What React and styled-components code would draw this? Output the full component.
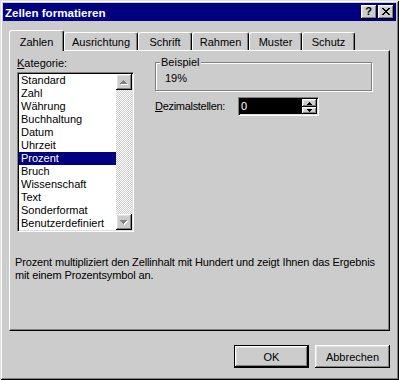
import React from 'react'
import styled, { createGlobalStyle } from 'styled-components'

const face = '#cccccc'

const GlobalStyle = createGlobalStyle`
    html, body {
        margin: 0;
        padding: 0;
        background: ${face};
    }
    body {
        font-family: "Liberation Sans", Arial, sans-serif;
        font-size: 11px;
    }
`

const raised = `
    box-shadow: inset -1px -1px 0 #000, inset 1px 1px 0 #fff,
        inset -2px -2px 0 #808080, inset 2px 2px 0 #dfdfdf;
`

const sunken = `
    border: 1px solid;
    border-color: #808080 #fff #fff #808080;
    box-shadow: inset 1px 1px 0 #000, inset -1px -1px 0 #dfdfdf;
`

const Window = styled.div`
    width: 399px;
    height: 380px;
    box-sizing: border-box;
    padding: 3px;
    background: ${face};
    box-shadow: inset 1px 1px 0 #dfdfdf, inset -1px -1px 0 #000,
        inset 2px 2px 0 #fff, inset -2px -2px 0 #808080;
    display: flex;
    flex-direction: column;
    color: #000;
    font-size: 11px;
    line-height: 13px;
`

const TitleBar = styled.div`
    height: 18px;
    background: #000080;
    color: #fff;
    display: flex;
    align-items: center;
    justify-content: space-between;
    padding: 0 2px;
`

const Title = styled.span`
    font-weight: bold;
    font-size: 11.6px;
`

const CaptionButtons = styled.div`
    display: flex;
    gap: 1px;
`

const CaptionButton = styled.div`
    width: 16px;
    height: 14px;
    box-sizing: border-box;
    background: ${face};
    ${raised}
    color: #000;
    font-weight: bold;
    font-size: 11px;
    display: flex;
    align-items: center;
    justify-content: center;
    padding: 0 1px 1px 0;
`

const Body = styled.div`
    flex: 1;
    display: flex;
    flex-direction: column;
    padding: 9px 6px 0 6px;
`

const TabStrip = styled.div`
    display: flex;
    align-items: flex-end;
    height: 20px;
    position: relative;
    z-index: 1;
`

const Tab = styled.div`
    box-sizing: border-box;
    width: ${p => p.$w}px;
    height: ${p => (p.$active ? 21 : 18)}px;
    margin-bottom: ${p => (p.$active ? -1 : 0)}px;
    padding-top: ${p => (p.$active ? 5 : 3)}px;
    background: ${face};
    border: 1px solid #fff;
    border-right-color: #000;
    border-bottom: none;
    border-radius: 3px 3px 0 0;
    box-shadow: inset -1px 0 0 #808080;
    text-align: center;
`

const Panel = styled.div`
    box-sizing: border-box;
    height: 281px;
    border: 1px solid #fff;
    border-right-color: #000;
    border-bottom-color: #000;
    box-shadow: inset -1px -1px 0 #808080;
    padding-top: 6px;
    display: flex;
    flex-direction: column;
`

const Columns = styled.div`
    display: flex;
    gap: 21px;
    padding-left: 7px;
`

const LeftColumn = styled.div`
    width: 117px;
    display: flex;
    flex-direction: column;
    gap: 2px;
`

const Label = styled.div`
    white-space: nowrap;
    width: ${p => (p.$w ? `${p.$w}px` : 'auto')};
    letter-spacing: ${p => (p.$tight ? '-0.3px' : 'normal')};
    & u {
        text-decoration: underline;
    }
`

const ListBox = styled.div`
    box-sizing: border-box;
    width: 117px;
    height: 160px;
    background: #fff;
    ${sunken}
    display: flex;
    padding: 1px;
`

const Items = styled.div`
    flex: 1;
    display: flex;
    flex-direction: column;
`

const Item = styled.div`
    height: 13px;
    padding-left: 2px;
    white-space: nowrap;
    overflow: hidden;
    background: ${p => (p.$selected ? '#000080' : 'transparent')};
    color: ${p => (p.$selected ? '#fff' : '#000')};
`

const ScrollBar = styled.div`
    width: 16px;
    display: flex;
    flex-direction: column;
`

const ScrollTrack = styled.div`
    flex: 1;
    background: repeating-conic-gradient(${face} 0 25%, #fff 0 50%) 0 0 / 2px 2px;
`

const ArrowButton = styled.div`
    width: ${p => p.$w || 16}px;
    height: ${p => p.$h || 16}px;
    box-sizing: border-box;
    background: ${face};
    ${raised}
    display: flex;
    align-items: center;
    justify-content: center;
`

const RightColumn = styled.div`
    flex: 1;
    display: flex;
    flex-direction: column;
    margin-top: -1px;
`

const GroupBox = styled.fieldset`
    width: 217px;
    box-sizing: border-box;
    margin: 0;
    padding: 3px 0 5px 4px;
    border: 1px solid #808080;
    box-shadow: inset 1px 1px 0 #fff, 1px 1px 0 #fff;
    min-inline-size: 0;
`

const Legend = styled.legend`
    padding: 0 1px;
    background: ${face};
`

const Sample = styled.div`
    padding-left: 5px;
`

const SpinRow = styled.div`
    display: flex;
    align-items: center;
    margin-top: 6px;
`

const SpinBox = styled.div`
    box-sizing: border-box;
    width: 81px;
    height: 19px;
    background: #fff;
    ${sunken}
    display: flex;
    padding: 1px;
`

const SpinField = styled.div`
    flex: 1;
    background: #000;
    color: #fff;
    padding-left: 1px;
    line-height: 15px;
`

const SpinButtons = styled.div`
    width: 15px;
    display: flex;
    flex-direction: column;
`

const Description = styled.div`
    margin-top: 24px;
    padding-left: 5px;
    width: 370px;
    letter-spacing: -0.13px;
`

const ButtonRow = styled.div`
    display: flex;
    justify-content: flex-end;
    gap: 6px;
    margin-top: 14px;
`

const Button = styled.button`
    width: 75px;
    height: 23px;
    box-sizing: border-box;
    margin: 0;
    padding: 0;
    font-family: inherit;
    font-size: 11px;
    color: #000;
    background: ${face};
    border: ${p => (p.$default ? '1px solid #000' : 'none')};
    ${raised}
`

const Arrow = ({ dir, disabled }) => {
    const rows = [0, 1, 2, 3]
    const rects = rows.map(i => {
        const y = dir === 'up' ? i : 3 - i
        return { x: 3 - i, y, w: 1 + 2 * i }
    })
    const fill = disabled ? '#808080' : '#000'
    return (
        <svg width="8" height="5" viewBox="0 0 8 5" shapeRendering="crispEdges">
            {disabled &&
                rects.map((r, i) => (
                    <rect key={`s${i}`} x={r.x + 1} y={r.y + 1} width={r.w} height="1" fill="#fff" />
                ))}
            {rects.map((r, i) => (
                <rect key={i} x={r.x} y={r.y} width={r.w} height="1" fill={fill} />
            ))}
        </svg>
    )
}

const SmallArrow = ({ dir }) => {
    const rects = [0, 1, 2].map(i => ({ x: 2 - i, y: dir === 'up' ? i : 2 - i, w: 1 + 2 * i }))
    return (
        <svg width="5" height="3" viewBox="0 0 5 3" shapeRendering="crispEdges">
            {rects.map((r, i) => (
                <rect key={i} x={r.x} y={r.y} width={r.w} height="1" fill="#000" />
            ))}
        </svg>
    )
}

const CloseGlyph = () => {
    const cells = []
    for (let i = 0; i < 7; i++) {
        cells.push(<rect key={`a${i}`} x={i} y={i} width="2" height="1" fill="#000" />)
        cells.push(<rect key={`b${i}`} x={6 - i} y={i} width="2" height="1" fill="#000" />)
    }
    return (
        <svg width="8" height="7" viewBox="0 0 8 7" shapeRendering="crispEdges">
            {cells}
        </svg>
    )
}

const tabs = [
    { label: 'Zahlen', w: 55 },
    { label: 'Ausrichtung', w: 74 },
    { label: 'Schrift', w: 54 },
    { label: 'Rahmen', w: 57 },
    { label: 'Muster', w: 53 },
    { label: 'Schutz', w: 53 },
]

const categories = [
    'Standard',
    'Zahl',
    'Währung',
    'Buchhaltung',
    'Datum',
    'Uhrzeit',
    'Prozent',
    'Bruch',
    'Wissenschaft',
    'Text',
    'Sonderformat',
    'Benutzerdefiniert',
]

export default function App() {
    return (
        <>
            <GlobalStyle />
            <Window>
                <TitleBar>
                    <Title>Zellen formatieren</Title>
                    <CaptionButtons>
                        <CaptionButton>?</CaptionButton>
                        <CaptionButton>
                            <CloseGlyph />
                        </CaptionButton>
                    </CaptionButtons>
                </TitleBar>
                <Body>
                    <TabStrip>
                        {tabs.map((t, i) => (
                            <Tab key={t.label} $w={t.w} $active={i === 0}>
                                {t.label}
                            </Tab>
                        ))}
                    </TabStrip>
                    <Panel>
                        <Columns>
                            <LeftColumn>
                                <Label>
                                    <u>K</u>ategorie:
                                </Label>
                                <ListBox>
                                    <Items>
                                        {categories.map(c => (
                                            <Item key={c} $selected={c === 'Prozent'}>
                                                {c}
                                            </Item>
                                        ))}
                                    </Items>
                                    <ScrollBar>
                                        <ArrowButton>
                                            <Arrow dir="up" disabled />
                                        </ArrowButton>
                                        <ScrollTrack />
                                        <ArrowButton>
                                            <Arrow dir="down" disabled />
                                        </ArrowButton>
                                    </ScrollBar>
                                </ListBox>
                            </LeftColumn>
                            <RightColumn>
                                <GroupBox>
                                    <Legend>Beispiel</Legend>
                                    <Sample>19%</Sample>
                                </GroupBox>
                                <SpinRow>
                                    <Label $w={83} $tight>
                                        <u>D</u>ezimalstellen:
                                    </Label>
                                    <SpinBox>
                                        <SpinField>0</SpinField>
                                        <SpinButtons>
                                            <ArrowButton $w={15} $h={8}>
                                                <SmallArrow dir="up" />
                                            </ArrowButton>
                                            <ArrowButton $w={15} $h={7}>
                                                <SmallArrow dir="down" />
                                            </ArrowButton>
                                        </SpinButtons>
                                    </SpinBox>
                                </SpinRow>
                            </RightColumn>
                        </Columns>
                        <Description>
                            Prozent multipliziert den Zellinhalt mit Hundert und zeigt Ihnen das Ergebnis
                            mit einem Prozentsymbol an.
                        </Description>
                    </Panel>
                    <ButtonRow>
                        <Button $default>OK</Button>
                        <Button>Abbrechen</Button>
                    </ButtonRow>
                </Body>
            </Window>
        </>
    )
}
